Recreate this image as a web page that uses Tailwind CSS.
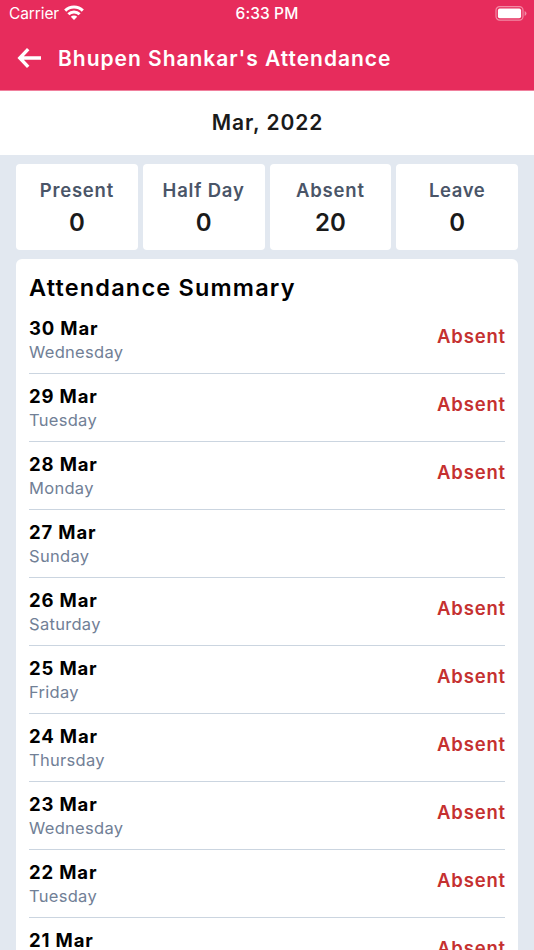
<!DOCTYPE html>
<html lang="en">

<head>
    <meta charset="UTF-8">
    <meta name="viewport" content="width=device-width, initial-scale=1.0">
    <title>Attendance</title>
    <script src="https://cdn.jsdelivr.net/npm/@tailwindcss/browser@4"></script>
</head>

<body class="h-screen overflow-hidden bg-[#e2e8f0] font-['Inter',sans-serif]">
    <!-- Header -->
    <header class="h-[91px] bg-[#e72c5c] border-b border-[#f0809d] text-white">
        <div class="grid grid-cols-3 items-center h-7 pl-[9px] pr-[7px] text-[15.5px]">
            <div class="flex items-center gap-[5px]">
                <span class="tracking-[-0.1px]">Carrier</span>
                <svg class="w-5 h-[15px] -mt-[3px]" viewBox="0 0 20 15" fill="none" stroke="currentColor" stroke-width="3">
                    <path d="M1.2 5.6A12.6 12.6 0 0 1 18.8 5.6" />
                    <path d="M4.4 9.2A8 8 0 0 1 15.6 9.2" />
                    <path d="M10 14.9L6.8 11.8A4.6 4.6 0 0 1 13.2 11.8Z" fill="currentColor" stroke="none" />
                </svg>
            </div>
            <span class="text-center font-medium tracking-[0.1px] whitespace-nowrap -ml-0.5">6:33 PM</span>
            <svg class="justify-self-end w-8 h-[15px] -mt-0.5" viewBox="0 0 32 15">
                <rect x="1" y="0.7" width="27" height="13.4" rx="3.6" fill="none" stroke="#f28aa5" stroke-width="1.2" />
                <rect x="2.9" y="2.6" width="23.2" height="9.6" rx="1.8" fill="#fff" />
                <path d="M29.6 5V10Q31.5 9.3 31.5 7.5T29.6 5Z" fill="#f28aa5" />
            </svg>
        </div>
        <div class="flex items-center h-[61px] pl-[17px] gap-[17px]">
            <svg class="w-6 h-5 -mt-0.5" viewBox="0 0 24 20" fill="none" stroke="currentColor" stroke-width="3.4">
                <path d="M11.2 1.2L2.8 10L11.2 18.8M2.5 10H24" />
            </svg>
            <h1 class="text-[21px] font-semibold tracking-[0.97px]">Bhupen Shankar's Attendance</h1>
        </div>
    </header>

    <!-- Month -->
    <div class="flex items-center justify-center h-16 pl-px bg-white text-[21px] font-semibold tracking-[0.95px] text-[#1a1a1a]">Mar, 2022</div>

    <main class="px-4 pt-[9px]">
        <!-- Totals -->
        <div class="grid grid-cols-4 gap-[5px] text-center font-semibold">
            <div class="h-[86px] pt-3 bg-white rounded">
                <p class="text-[18.5px] leading-7 tracking-[0.8px] text-[#4a5568]">Present</p>
                <p class="text-[24px] leading-[37px] text-[#1a1a1a]">0</p>
            </div>
            <div class="h-[86px] pt-3 bg-white rounded">
                <p class="text-[18.5px] leading-7 tracking-[0.8px] text-[#4a5568]">Half Day</p>
                <p class="text-[24px] leading-[37px] text-[#1a1a1a]">0</p>
            </div>
            <div class="h-[86px] pt-3 bg-white rounded">
                <p class="text-[18.5px] leading-7 tracking-[0.8px] text-[#4a5568]">Absent</p>
                <p class="text-[24px] leading-[37px] text-[#1a1a1a]">20</p>
            </div>
            <div class="h-[86px] pt-3 bg-white rounded">
                <p class="text-[18.5px] leading-7 tracking-[0.6px] text-[#4a5568]">Leave</p>
                <p class="text-[24px] leading-[37px] text-[#1a1a1a]">0</p>
            </div>
        </div>

        <!-- Summary -->
        <section class="mt-[9px] px-[13px] pt-[11px] bg-white rounded-md">
            <h2 class="text-[23.5px] leading-9 font-semibold tracking-[1.18px] text-black">Attendance Summary</h2>
            <div id="attendance-list">
                <!-- Rows are inserted here -->
            </div>
        </section>
    </main>

    <script>
        const attendance = [
            { date: "30 Mar", day: "Wednesday", status: "Absent" },
            { date: "29 Mar", day: "Tuesday", status: "Absent" },
            { date: "28 Mar", day: "Monday", status: "Absent" },
            { date: "27 Mar", day: "Sunday", status: "" },
            { date: "26 Mar", day: "Saturday", status: "Absent" },
            { date: "25 Mar", day: "Friday", status: "Absent" },
            { date: "24 Mar", day: "Thursday", status: "Absent" },
            { date: "23 Mar", day: "Wednesday", status: "Absent" },
            { date: "22 Mar", day: "Tuesday", status: "Absent" },
            { date: "21 Mar", day: "Monday", status: "Absent" }
        ];

        document.getElementById("attendance-list").innerHTML = attendance.map(item => `
            <div class="flex justify-between h-[68px] pt-2 border-b border-[#cbd5e0]">
                <div>
                    <p class="text-[18.5px] leading-7 font-bold tracking-[0.85px] text-black">${item.date}</p>
                    <p class="text-[16.5px] leading-5 tracking-[0.3px] text-[#718096]">${item.day}</p>
                </div>
                <p class="text-[18.5px] leading-[44px] -mr-px font-semibold tracking-[0.85px] text-[#c53030]">${item.status}</p>
            </div>
        `).join("");
    </script>
</body>

</html>
